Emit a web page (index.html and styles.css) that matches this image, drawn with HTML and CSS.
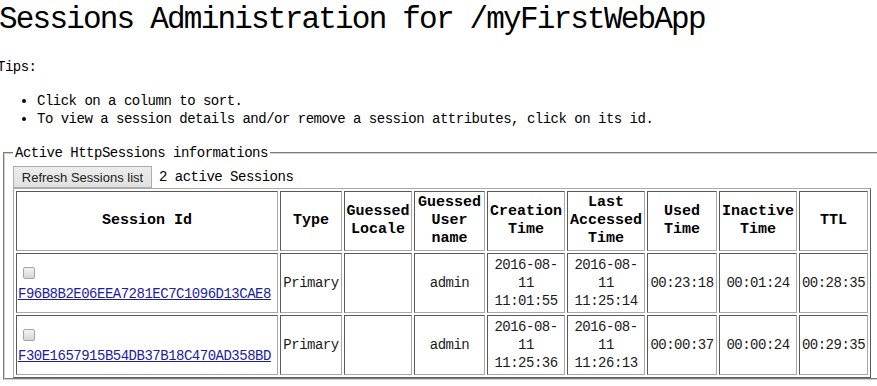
FILE: index.html
```html
<!DOCTYPE html>
<html lang="en">
<head>
<meta charset="utf-8">
<title>Sessions Administration</title>
<link rel="stylesheet" href="styles.css">
</head>
<body>
<h1 class="title">Sessions Administration for /myFirstWebApp</h1>
<p class="tips-label">Tips:</p>
<ul class="tips">
  <li>Click on a column to sort.</li>
  <li>To view a session details and/or remove a session attributes, click on its id.</li>
</ul>
<fieldset class="sessions">
  <legend class="sessions-legend">Active HttpSessions informations</legend>
  <div class="toolbar">
    <button class="refresh-btn" type="button">Refresh Sessions list</button>
    <span class="count">2 active Sessions</span>
  </div>
  <table class="sessions-table">
    <colgroup>
      <col class="c-id"><col class="c-type"><col class="c-locale"><col class="c-user"><col class="c-created"><col class="c-accessed"><col class="c-used"><col class="c-inactive"><col class="c-ttl">
    </colgroup>
    <thead>
      <tr>
        <th>Session Id</th>
        <th>Type</th>
        <th>Guessed Locale</th>
        <th>Guessed User name</th>
        <th>Creation Time</th>
        <th>Last Accessed Time</th>
        <th>Used Time</th>
        <th>Inactive Time</th>
        <th>TTL</th>
      </tr>
    </thead>
    <tbody>
      <tr>
        <td class="id-cell"><input class="check" type="checkbox"><a class="sid" href="#">F96B8B2E06EEA7281EC7C1096D13CAE8</a></td>
        <td>Primary</td>
        <td></td>
        <td>admin</td>
        <td>2016-08-<br>11<br>11:01:55</td>
        <td>2016-08-<br>11<br>11:25:14</td>
        <td>00:23:18</td>
        <td>00:01:24</td>
        <td>00:28:35</td>
      </tr>
      <tr>
        <td class="id-cell"><input class="check" type="checkbox"><a class="sid" href="#">F30E1657915B54DB37B18C470AD358BD</a></td>
        <td>Primary</td>
        <td></td>
        <td>admin</td>
        <td>2016-08-<br>11<br>11:25:36</td>
        <td>2016-08-<br>11<br>11:26:13</td>
        <td>00:00:37</td>
        <td>00:00:24</td>
        <td>00:29:35</td>
      </tr>
    </tbody>
  </table>
</fieldset>
</body>
</html>
```
FILE: styles.css
```css
html {
  overflow: hidden;
  background: #fff;
}

body {
  margin: 0 0 0 -3px;
  font-family: "Liberation Mono", "DejaVu Sans Mono", monospace;
  font-size: 14px;
  letter-spacing: -0.5px;
  line-height: 18px;
  color: #000;
}

.title {
  margin: 2px 0 0 2px;
  font-size: 31px;
  line-height: 36px;
  font-weight: normal;
  letter-spacing: -1.8px;
}

.tips-label {
  margin: 20px 0 0;
}

.tips {
  margin: 16px 0 0;
  padding-left: 40px;
}

.sessions {
  width: 920px;
  margin: 16px 0 0 6px;
  padding: 4px 0 0 8px;
  border: 2px groove #d0d0d0;
  min-inline-size: 0;
}

.sessions-legend {
  padding: 0 2px;
}

.toolbar {
  display: flex;
  align-items: center;
  gap: 7px;
  height: 22px;
}

.refresh-btn {
  box-sizing: border-box;
  height: 22px;
  width: 139px;
  padding: 0;
  margin: 0;
  border: 1px solid #adadad;
  background: linear-gradient(#ececec, #e1e1e1);
  font-family: "Liberation Sans", Arial, sans-serif;
  font-size: 13px;
  letter-spacing: 0;
  color: #222;
}

.sessions-table {
  width: 858px;
  table-layout: fixed;
  border-collapse: separate;
  border-spacing: 2px;
  border: 1px solid;
  border-color: #a8a8a8 #5a5a5a #5a5a5a #a8a8a8;
}

.c-id { width: 262px; }
.c-type { width: 62px; }
.c-locale { width: 68px; }
.c-user { width: 71px; }
.c-created { width: 78px; }
.c-accessed { width: 78px; }
.c-used { width: 70px; }
.c-inactive { width: 78px; }
.c-ttl { width: 69px; }

.sessions-table th,
.sessions-table td {
  border: 1px solid;
  border-color: #5a5a5a #a8a8a8 #a8a8a8 #5a5a5a;
  padding: 2px 1px;
  line-height: 18px;
  vertical-align: middle;
  text-align: center;
  overflow: hidden;
}

.sessions-table th {
  font-size: 15px;
  font-weight: bold;
  letter-spacing: 0;
}

.sessions-table td {
  color: #1a1a1a;
}

.sessions-table td.id-cell {
  text-align: left;
}

.check {
  display: block;
  appearance: none;
  -webkit-appearance: none;
  box-sizing: border-box;
  width: 12px;
  height: 12px;
  margin: 4px 0 6px 5px;
  border: 1px solid #a5a5a5;
  border-radius: 2px;
  background: linear-gradient(#f3f3f3, #d6d6d6);
}

.sid {
  color: #1c1c9e;
  text-decoration: underline;
}
```
